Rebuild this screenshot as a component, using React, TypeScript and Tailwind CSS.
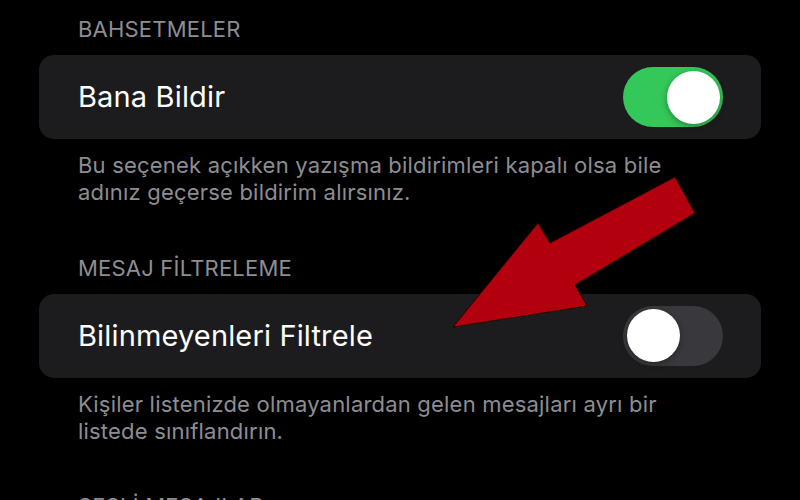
import React from 'react';

type Row = {
  header: string;
  label: string;
  on: boolean;
  footer: string[];
};

const sections: Row[] = [
  {
    header: 'BAHSETMELER',
    label: 'Bana Bildir',
    on: true,
    footer: [
      'Bu seçenek açıkken yazışma bildirimleri kapalı olsa bile',
      'adınız geçerse bildirim alırsınız.',
    ],
  },
  {
    header: 'MESAJ FİLTRELEME',
    label: 'Bilinmeyenleri Filtrele',
    on: false,
    footer: [
      'Kişiler listenizde olmayanlardan gelen mesajları ayrı bir',
      'listede sınıflandırın.',
    ],
  },
];

function Toggle({ on }: { on: boolean }) {
  return (
    <div
      className={`w-[100px] h-[60px] rounded-full flex items-center px-[3.5px] ${
        on ? 'bg-[#34c759] justify-end' : 'bg-[#39393d] justify-start'
      }`}
    >
      <div className="w-[53px] h-[53px] rounded-full bg-white shadow-[0_2px_6px_rgba(0,0,0,0.35)]" />
    </div>
  );
}

export default function App() {
  return (
    <div className="relative w-[800px] h-[500px] overflow-hidden bg-black font-['Inter',sans-serif] antialiased">
      <div className="px-[39px] pt-[15px] flex flex-col">
        {sections.map((s) => (
          <div key={s.header} className="flex flex-col mb-[47.5px]">
            <div className="pl-[39px] text-[22px] leading-[28px] text-[#8d8d93] tracking-[0.2px]">
              {s.header}
            </div>
            <div className="mt-[12px] h-[84px] rounded-[15px] bg-[#1c1c1e] flex items-center justify-between pl-[39px] pr-[38px]">
              <span className="text-[29px] text-white tracking-[0.15px]">{s.label}</span>
              <Toggle on={s.on} />
            </div>
            <div className="mt-[13px] pl-[39px] text-[22px] leading-[27px] text-[#8d8d93] tracking-[0.2px]">
              {s.footer.map((l) => (
                <div key={l}>{l}</div>
              ))}
            </div>
          </div>
        ))}
        <div className="pl-[39px] text-[22px] leading-[28px] text-[#8d8d93] tracking-[0.2px]">
          SESLİ MESAJLAR
        </div>
      </div>

      {/* red annotation arrow */}
      <svg className="absolute inset-0 pointer-events-none" width="800" height="500" viewBox="0 0 800 500">
        <polygon
          points="675,177 695,213 575,285 587,306 453,327 538,223 550,243"
          fill="#b2000e"
          stroke="#2a0000"
          strokeWidth="1"
          strokeLinejoin="miter"
        />
      </svg>
    </div>
  );
}
